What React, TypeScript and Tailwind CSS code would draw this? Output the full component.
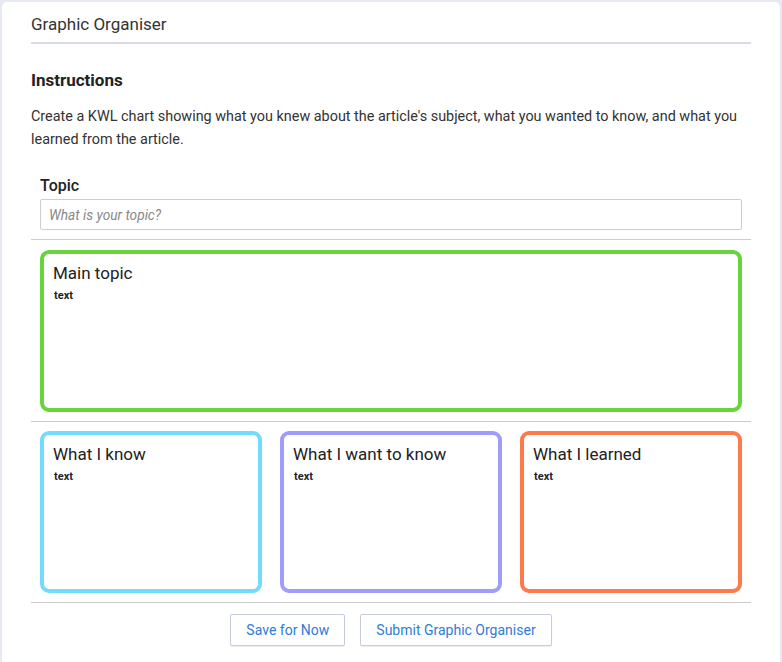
// KWL graphic organiser card — static rendering of the worksheet.

const FONT = { fontFamily: 'Roboto, "Noto Sans", Arial, sans-serif' }

interface BoxProps {
  title: string
  border: string
}

function ChartBox({ title, border }: BoxProps) {
  return (
    <div className={`h-[162px] rounded-[9px] border-4 px-[9px] pt-[9px] ${border}`}>
      <h4 className="text-[17px] leading-[20px] text-[#222]">{title}</h4>
      <p className="mt-[6px] pl-[1px] text-[11px] leading-[13px] font-bold text-[#222]">text</p>
    </div>
  )
}

export default function App() {
  return (
    <div className="min-h-screen bg-[#e6e8f2] pt-[2px] pl-[2px] pr-[2px]" style={FONT}>
      <div className="w-[778px] rounded-t-[5px] bg-white pb-6 pl-[29px] pr-[29px] pt-[12px]">
        <h2 className="border-b-2 border-[#d8dbe8] pb-[8px] text-[17px] leading-[20px] text-[#333]">
          Graphic Organiser
        </h2>

        <h3 className="mt-[26px] text-[17px] leading-[20px] font-bold text-[#222]">Instructions</h3>
        <p className="mt-[15px] text-[14.4px] leading-[23px] text-[#333]">
          Create a KWL chart showing what you knew about the article's subject, what you wanted to
          know, and what you learned from the article.
        </p>

        <div className="px-[9px]">
          <label className="mt-[26px] block text-[16px] leading-[18px] font-medium text-[#222]">Topic</label>
          <input
            type="text"
            placeholder="What is your topic?"
            className="mt-[4px] h-[31px] w-full rounded-[2px] border border-[#ccced6] px-2 text-[13.7px] italic text-[#333] placeholder:text-[#888] outline-none"
          />
        </div>

        <div className="mt-[9px] border-t border-[#ccc] px-[9px] pt-[10px] pb-[9px]">
          <ChartBox title="Main topic" border="border-[#67d43b]" />
        </div>

        <div className="border-t border-[#ccc] px-[9px] pt-[9px] pb-[9px]">
          <div className="grid grid-cols-3 gap-[18px]">
            <ChartBox title="What I know" border="border-[#73dcfd]" />
            <ChartBox title="What I want to know" border="border-[#a09cfa]" />
            <ChartBox title="What I learned" border="border-[#ff7a4b]" />
          </div>
        </div>

        <div className="flex justify-center gap-[15px] border-t border-[#ccc] pt-[11px]">
          <button
            type="button"
            className="h-[32px] rounded-[2px] border border-[#c5cadc] bg-white px-[15px] text-[14px] text-[#2f7cd8] shadow-[0_1px_1px_rgba(0,0,0,0.08)]"
          >
            Save for Now
          </button>
          <button
            type="button"
            className="h-[32px] rounded-[2px] border border-[#c5cadc] bg-white px-[15px] text-[14px] text-[#2f7cd8] shadow-[0_1px_1px_rgba(0,0,0,0.08)]"
          >
            Submit Graphic Organiser
          </button>
        </div>
      </div>
    </div>
  )
}
